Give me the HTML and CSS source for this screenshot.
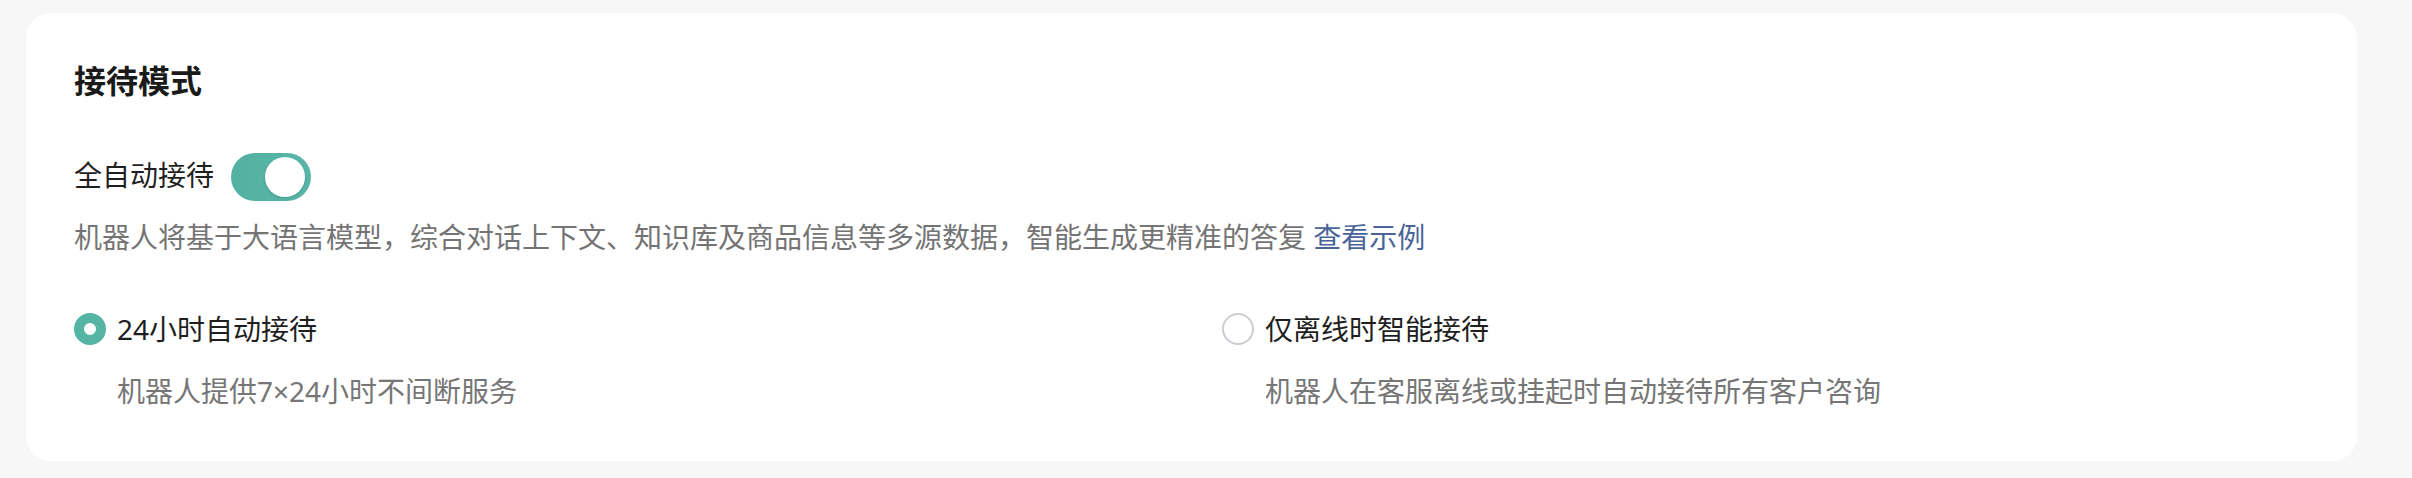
FILE: index.html
```html
<!DOCTYPE html>
<html lang="zh-CN">
<head>
<meta charset="utf-8">
<title>接待模式</title>
<link rel="stylesheet" href="styles.css">
</head>
<body>

<div class="card">
  <h2 class="card-title">接待模式</h2>

  <div class="auto-row">
    <span class="auto-label">全自动接待</span>
    <span class="switch is-on"><span class="switch-knob"></span></span>
  </div>
  <p class="auto-desc">机器人将基于大语言模型，综合对话上下文、知识库及商品信息等多源数据，智能生成更精准的答复 <a class="link" href="#">查看示例</a></p>

  <div class="options">
    <div class="option">
      <div class="option-head">
        <span class="radio is-checked"></span>
        <span class="option-title">24小时自动接待</span>
      </div>
      <p class="option-desc">机器人提供7×24小时不间断服务</p>
    </div>
    <div class="option">
      <div class="option-head">
        <span class="radio"></span>
        <span class="option-title">仅离线时智能接待</span>
      </div>
      <p class="option-desc">机器人在客服离线或挂起时自动接待所有客户咨询</p>
    </div>
  </div>
</div>

</body>
</html>
```

FILE: styles.css
```css
body {
  margin: 0;
  padding: 13px 55px 16px 26px;
  background-color: #f7f7f7;
  font-family: "Noto Sans", "Noto Sans CJK SC", sans-serif;
  color: #1f1f1f;
}

.card {
  background: #ffffff;
  border-radius: 25px;
  padding: 46px 48px 50px 48px;
}

.card-title {
  margin: 0;
  font-size: 32px;
  line-height: 44px;
  font-weight: 700;
  color: #1a1a1a;
}

.auto-row {
  display: flex;
  align-items: center;
  gap: 17px;
  margin-top: 50px;
  height: 48px;
}
.auto-label {
  font-size: 28px;
  line-height: 40px;
  margin-top: -5px;
}

.switch {
  position: relative;
  display: inline-block;
  width: 80px;
  height: 48px;
  border-radius: 24px;
  background: #cfd2d6;
}
.switch.is-on {
  background: linear-gradient(90deg, #52b1a1, #58b6a7);
}
.switch-knob {
  position: absolute;
  top: 4px;
  right: 6px;
  width: 40px;
  height: 40px;
  border-radius: 50%;
  background: #ffffff;
  box-shadow: 0 1px 3px rgba(0, 0, 0, 0.15);
}

.auto-desc {
  margin: 16px 0 0 0;
  font-size: 28px;
  line-height: 40px;
  color: #747474;
}
.link {
  color: #4b6599;
  text-decoration: none;
}

.options {
  display: grid;
  grid-template-columns: 1fr 1fr;
  column-gap: 61px;
  margin-top: 52px;
}

.option-head {
  display: flex;
  align-items: center;
  gap: 11px;
  height: 40px;
}
.option-title {
  font-size: 28px;
  line-height: 40px;
  color: #1f1f1f;
}
.option-desc {
  margin: 22px 0 0 43px;
  font-size: 28px;
  line-height: 40px;
  color: #767676;
}

.radio {
  box-sizing: border-box;
  flex: none;
  width: 32px;
  height: 32px;
  border-radius: 50%;
  border: 2px solid #cbcdd2;
  background: #ffffff;
}
.radio.is-checked {
  border: 10.5px solid #56b4a5;
  background: #ffffff;
}
```
